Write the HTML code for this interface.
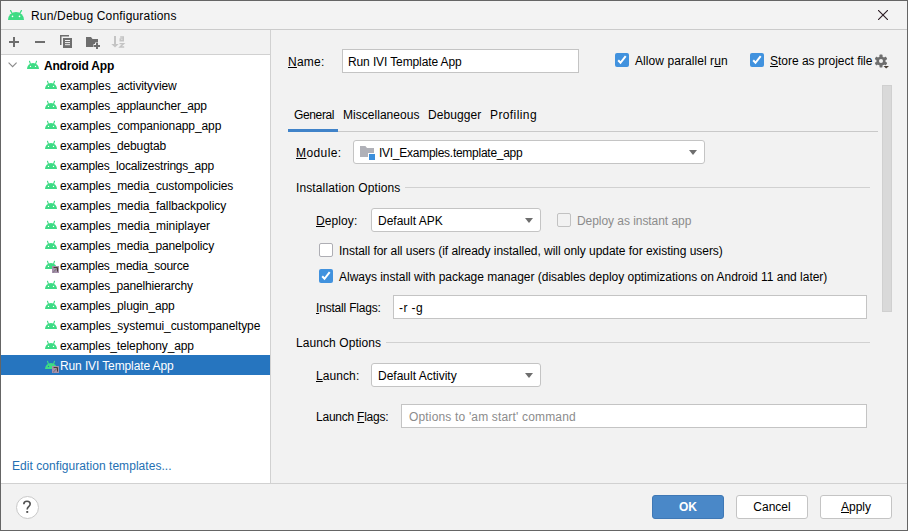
<!DOCTYPE html>
<html><head><meta charset="utf-8">
<style>
*{margin:0;padding:0;box-sizing:border-box}
html,body{width:908px;height:531px;overflow:hidden;background:#f2f2f2}
body{position:relative;font-family:"Liberation Sans",sans-serif;font-size:12px;color:#000}
.a{position:absolute}
.t{position:absolute;white-space:pre;font-size:12px;line-height:16px}
.u{text-decoration:underline;text-underline-offset:1px;text-decoration-thickness:1px}
.box{position:absolute;background:#fff;border:1px solid #c4c4c4}
.combo{position:absolute;background:#fff;border:1px solid #c4c4c4;border-radius:3px}
.arrow{position:absolute;width:0;height:0;border-left:4.5px solid transparent;border-right:4.5px solid transparent;border-top:5px solid #6e6e6e}
.cb{position:absolute;width:14px;height:14px;border-radius:2px}
.cbon{background:#4192de}
.cboff{background:#fff;border:1px solid #aeaeb4}
.hl{position:absolute;height:1px;background:#d1d1d1}
.btn{position:absolute;height:24px;width:72px;border-radius:3px;border:1px solid #c4c4c4;background:#fff;text-align:center;line-height:23px;font-size:12px;white-space:pre}
</style></head><body>
<div class="a" style="left:0;top:0;width:908px;height:531px;border:1px solid #656565;z-index:50"></div>
<div class="a" style="left:1px;top:1px;width:906px;height:28px;background:#f3f3f3"></div>
<div class="hl" style="left:1px;top:29px;width:906px;background:#cbcbcb"></div>
<svg class="a" style="left:8px;top:10px" width="16" height="10" viewBox="0 0 16 10">
<path d="M0 10 A8 8 0 0 1 16 10 Z" fill="#3ddc84"/>
<path d="M2.6 0.6 L3.9 3 M13.4 0.6 L12.1 3" stroke="#3ddc84" stroke-width="1.3" stroke-linecap="round"/>
<circle cx="4.5" cy="6.4" r="0.8" fill="#fff"/><circle cx="11.5" cy="6.4" r="0.8" fill="#fff"/>
</svg>
<div class="t" style="left:31px;top:8px;letter-spacing:0.174px;">Run/Debug Configurations</div>
<svg class="a" style="left:878px;top:10px" width="10" height="10" viewBox="0 0 10 10"><path d="M0 0L10 10M10 0L0 10" stroke="#2a1a22" stroke-width="1.1"/></svg>
<div class="a" style="left:270px;top:30px;width:1px;height:453px;background:#d1d1d1"></div>
<div class="hl" style="left:1px;top:54px;width:269px"></div>
<div class="a" style="left:1px;top:55px;width:269px;height:428px;background:#fff"></div>
<svg class="a" style="left:0;top:30px" width="130" height="24" viewBox="0 30 130 24">
<path d="M9 42H19M14 37V47" stroke="#6e6e6e" stroke-width="2"/>
<path d="M35 42H45" stroke="#6e6e6e" stroke-width="2"/>
<path d="M60.75 45V35.75H69" stroke="#6e6e6e" stroke-width="1.5" fill="none"/>
<rect x="63" y="38" width="9" height="10" fill="#6e6e6e"/>
<path d="M65 40.5H70M65 42.6H70M65 44.7H70" stroke="#f2f2f2" stroke-width="1"/>
<path d="M86 37H91L92.5 39H98V47H86Z" fill="#6e6e6e"/>
<path d="M97 42.5V49.5M93.5 46H100.5" stroke="#f2f2f2" stroke-width="4"/>
<path d="M97 43V49M94 46H100" stroke="#6e6e6e" stroke-width="2"/>
<path d="M115 36V45" stroke="#c4c4c4" stroke-width="2"/>
<path d="M111.3 44H118.7L115 47.6Z" fill="#c4c4c4"/>
<path d="M120.2 37H123.3V40.8H120.2V38.9H123" stroke="#c4c4c4" stroke-width="1.4" fill="none"/>
<path d="M119.5 43.6H123.6L120 47H124.2" stroke="#c4c4c4" stroke-width="1.4" fill="none"/>
</svg>
<svg class="a" style="left:8px;top:62px" width="10" height="6" viewBox="0 0 10 6"><path d="M0.6 0.6L4.6 4.6L8.6 0.6" stroke="#8a8a8a" stroke-width="1.1" fill="none"/></svg>
<svg class="a" style="left:27px;top:61px;overflow:visible" width="12" height="9" viewBox="0 0 12 9">
<path d="M0 8 A6 6 0 0 1 12 8 Z" fill="#3ddc84"/>
<path d="M2.5 0.3 L3.4 2.9 M9.5 0.3 L8.6 2.9" stroke="#3ddc84" stroke-width="1.1" stroke-linecap="round"/>
<circle cx="3.5" cy="5.4" r="0.65" fill="#fff"/><circle cx="8.5" cy="5.4" r="0.65" fill="#fff"/>
</svg><div class="t" style="left:44px;top:58px;letter-spacing:-0.2px;font-weight:bold;">Android App</div>
<svg class="a" style="left:45px;top:81px;overflow:visible" width="12" height="9" viewBox="0 0 12 9">
<path d="M0 8 A6 6 0 0 1 12 8 Z" fill="#3ddc84"/>
<path d="M2.5 0.3 L3.4 2.9 M9.5 0.3 L8.6 2.9" stroke="#3ddc84" stroke-width="1.1" stroke-linecap="round"/>
<circle cx="3.5" cy="5.4" r="0.65" fill="#fff"/><circle cx="8.5" cy="5.4" r="0.65" fill="#fff"/>
</svg><div class="t" style="left:60px;top:78px;letter-spacing:-0.1px;">examples_activityview</div>
<svg class="a" style="left:45px;top:101px;overflow:visible" width="12" height="9" viewBox="0 0 12 9">
<path d="M0 8 A6 6 0 0 1 12 8 Z" fill="#3ddc84"/>
<path d="M2.5 0.3 L3.4 2.9 M9.5 0.3 L8.6 2.9" stroke="#3ddc84" stroke-width="1.1" stroke-linecap="round"/>
<circle cx="3.5" cy="5.4" r="0.65" fill="#fff"/><circle cx="8.5" cy="5.4" r="0.65" fill="#fff"/>
</svg><div class="t" style="left:60px;top:98px;letter-spacing:-0.165px;">examples_applauncher_app</div>
<svg class="a" style="left:45px;top:121px;overflow:visible" width="12" height="9" viewBox="0 0 12 9">
<path d="M0 8 A6 6 0 0 1 12 8 Z" fill="#3ddc84"/>
<path d="M2.5 0.3 L3.4 2.9 M9.5 0.3 L8.6 2.9" stroke="#3ddc84" stroke-width="1.1" stroke-linecap="round"/>
<circle cx="3.5" cy="5.4" r="0.65" fill="#fff"/><circle cx="8.5" cy="5.4" r="0.65" fill="#fff"/>
</svg><div class="t" style="left:60px;top:118px;letter-spacing:-0.088px;">examples_companionapp_app</div>
<svg class="a" style="left:45px;top:141px;overflow:visible" width="12" height="9" viewBox="0 0 12 9">
<path d="M0 8 A6 6 0 0 1 12 8 Z" fill="#3ddc84"/>
<path d="M2.5 0.3 L3.4 2.9 M9.5 0.3 L8.6 2.9" stroke="#3ddc84" stroke-width="1.1" stroke-linecap="round"/>
<circle cx="3.5" cy="5.4" r="0.65" fill="#fff"/><circle cx="8.5" cy="5.4" r="0.65" fill="#fff"/>
</svg><div class="t" style="left:60px;top:138px;letter-spacing:-0.119px;">examples_debugtab</div>
<svg class="a" style="left:45px;top:161px;overflow:visible" width="12" height="9" viewBox="0 0 12 9">
<path d="M0 8 A6 6 0 0 1 12 8 Z" fill="#3ddc84"/>
<path d="M2.5 0.3 L3.4 2.9 M9.5 0.3 L8.6 2.9" stroke="#3ddc84" stroke-width="1.1" stroke-linecap="round"/>
<circle cx="3.5" cy="5.4" r="0.65" fill="#fff"/><circle cx="8.5" cy="5.4" r="0.65" fill="#fff"/>
</svg><div class="t" style="left:60px;top:158px;letter-spacing:-0.222px;">examples_localizestrings_app</div>
<svg class="a" style="left:45px;top:181px;overflow:visible" width="12" height="9" viewBox="0 0 12 9">
<path d="M0 8 A6 6 0 0 1 12 8 Z" fill="#3ddc84"/>
<path d="M2.5 0.3 L3.4 2.9 M9.5 0.3 L8.6 2.9" stroke="#3ddc84" stroke-width="1.1" stroke-linecap="round"/>
<circle cx="3.5" cy="5.4" r="0.65" fill="#fff"/><circle cx="8.5" cy="5.4" r="0.65" fill="#fff"/>
</svg><div class="t" style="left:60px;top:178px;letter-spacing:-0.1px;">examples_media_custompolicies</div>
<svg class="a" style="left:45px;top:201px;overflow:visible" width="12" height="9" viewBox="0 0 12 9">
<path d="M0 8 A6 6 0 0 1 12 8 Z" fill="#3ddc84"/>
<path d="M2.5 0.3 L3.4 2.9 M9.5 0.3 L8.6 2.9" stroke="#3ddc84" stroke-width="1.1" stroke-linecap="round"/>
<circle cx="3.5" cy="5.4" r="0.65" fill="#fff"/><circle cx="8.5" cy="5.4" r="0.65" fill="#fff"/>
</svg><div class="t" style="left:60px;top:198px;letter-spacing:-0.093px;">examples_media_fallbackpolicy</div>
<svg class="a" style="left:45px;top:221px;overflow:visible" width="12" height="9" viewBox="0 0 12 9">
<path d="M0 8 A6 6 0 0 1 12 8 Z" fill="#3ddc84"/>
<path d="M2.5 0.3 L3.4 2.9 M9.5 0.3 L8.6 2.9" stroke="#3ddc84" stroke-width="1.1" stroke-linecap="round"/>
<circle cx="3.5" cy="5.4" r="0.65" fill="#fff"/><circle cx="8.5" cy="5.4" r="0.65" fill="#fff"/>
</svg><div class="t" style="left:60px;top:218px;letter-spacing:-0.088px;">examples_media_miniplayer</div>
<svg class="a" style="left:45px;top:241px;overflow:visible" width="12" height="9" viewBox="0 0 12 9">
<path d="M0 8 A6 6 0 0 1 12 8 Z" fill="#3ddc84"/>
<path d="M2.5 0.3 L3.4 2.9 M9.5 0.3 L8.6 2.9" stroke="#3ddc84" stroke-width="1.1" stroke-linecap="round"/>
<circle cx="3.5" cy="5.4" r="0.65" fill="#fff"/><circle cx="8.5" cy="5.4" r="0.65" fill="#fff"/>
</svg><div class="t" style="left:60px;top:238px;letter-spacing:-0.132px;">examples_media_panelpolicy</div>
<svg class="a" style="left:45px;top:261px;overflow:visible" width="12" height="9" viewBox="0 0 12 9">
<path d="M0 8 A6 6 0 0 1 12 8 Z" fill="#3ddc84"/>
<path d="M2.5 0.3 L3.4 2.9 M9.5 0.3 L8.6 2.9" stroke="#3ddc84" stroke-width="1.1" stroke-linecap="round"/>
<circle cx="3.5" cy="5.4" r="0.65" fill="#fff"/><rect x="7" y="5" width="7" height="7" fill="#a590ab"/><path d="M8.6 6.5H12.5V10.6" stroke="#4a3c33" stroke-width="1" fill="none"/><path d="M8.2 11.2L12 7.4" stroke="#707070" stroke-width="1"/>
</svg><div class="t" style="left:60px;top:258px;letter-spacing:-0.215px;">examples_media_source</div>
<svg class="a" style="left:45px;top:281px;overflow:visible" width="12" height="9" viewBox="0 0 12 9">
<path d="M0 8 A6 6 0 0 1 12 8 Z" fill="#3ddc84"/>
<path d="M2.5 0.3 L3.4 2.9 M9.5 0.3 L8.6 2.9" stroke="#3ddc84" stroke-width="1.1" stroke-linecap="round"/>
<circle cx="3.5" cy="5.4" r="0.65" fill="#fff"/><circle cx="8.5" cy="5.4" r="0.65" fill="#fff"/>
</svg><div class="t" style="left:60px;top:278px;letter-spacing:-0.173px;">examples_panelhierarchy</div>
<svg class="a" style="left:45px;top:301px;overflow:visible" width="12" height="9" viewBox="0 0 12 9">
<path d="M0 8 A6 6 0 0 1 12 8 Z" fill="#3ddc84"/>
<path d="M2.5 0.3 L3.4 2.9 M9.5 0.3 L8.6 2.9" stroke="#3ddc84" stroke-width="1.1" stroke-linecap="round"/>
<circle cx="3.5" cy="5.4" r="0.65" fill="#fff"/><circle cx="8.5" cy="5.4" r="0.65" fill="#fff"/>
</svg><div class="t" style="left:60px;top:298px;letter-spacing:-0.111px;">examples_plugin_app</div>
<svg class="a" style="left:45px;top:321px;overflow:visible" width="12" height="9" viewBox="0 0 12 9">
<path d="M0 8 A6 6 0 0 1 12 8 Z" fill="#3ddc84"/>
<path d="M2.5 0.3 L3.4 2.9 M9.5 0.3 L8.6 2.9" stroke="#3ddc84" stroke-width="1.1" stroke-linecap="round"/>
<circle cx="3.5" cy="5.4" r="0.65" fill="#fff"/><circle cx="8.5" cy="5.4" r="0.65" fill="#fff"/>
</svg><div class="t" style="left:60px;top:318px;letter-spacing:-0.075px;">examples_systemui_custompaneltype</div>
<svg class="a" style="left:45px;top:341px;overflow:visible" width="12" height="9" viewBox="0 0 12 9">
<path d="M0 8 A6 6 0 0 1 12 8 Z" fill="#3ddc84"/>
<path d="M2.5 0.3 L3.4 2.9 M9.5 0.3 L8.6 2.9" stroke="#3ddc84" stroke-width="1.1" stroke-linecap="round"/>
<circle cx="3.5" cy="5.4" r="0.65" fill="#fff"/><circle cx="8.5" cy="5.4" r="0.65" fill="#fff"/>
</svg><div class="t" style="left:60px;top:338px;letter-spacing:-0.133px;">examples_telephony_app</div>
<div class="a" style="left:1px;top:355px;width:269px;height:20px;background:#2675bf"></div>
<svg class="a" style="left:45px;top:361px;overflow:visible" width="12" height="9" viewBox="0 0 12 9">
<path d="M0 8 A6 6 0 0 1 12 8 Z" fill="#3ddc84"/>
<path d="M2.5 0.3 L3.4 2.9 M9.5 0.3 L8.6 2.9" stroke="#3ddc84" stroke-width="1.1" stroke-linecap="round"/>
<circle cx="3.5" cy="5.4" r="0.65" fill="#2675bf"/><rect x="7" y="5" width="7" height="7" fill="#a590ab"/><path d="M8.6 6.5H12.5V10.6" stroke="#4a3c33" stroke-width="1" fill="none"/><path d="M8.2 11.2L12 7.4" stroke="#707070" stroke-width="1"/>
</svg><div class="t" style="left:60px;top:358px;letter-spacing:-0.116px;color:#fff;">Run IVI Template App</div>
<div class="t" style="left:12px;top:458px;letter-spacing:0.05px;color:#2470b3">Edit configuration templates...</div>
<div class="hl" style="left:1px;top:483px;width:906px"></div>
<div class="a" style="left:16px;top:496px;width:23px;height:23px;border-radius:50%;background:#fff;border:1px solid #c9c9c9"></div>
<svg class="a" style="left:16px;top:496px" width="23" height="23" viewBox="16 496 23 23"><path d="M23.8 504.2C23.8 502.4 25.2 501.3 27 501.3C28.8 501.3 30.2 502.4 30.2 504C30.2 505.4 29.3 506 28.4 506.8C27.6 507.5 27.2 508 27.2 509.4" stroke="#505050" stroke-width="1.6" fill="none"/><rect x="26.3" y="511" width="1.9" height="1.9" fill="#505050"/></svg>
<div class="btn" style="left:652px;top:495px;background:#4a88c8;border-color:#3f78b5;color:#fff;font-weight:bold">OK</div>
<div class="btn" style="left:736px;top:495px">Cancel</div>
<div class="btn" style="left:820px;top:495px"><span class="u">A</span>pply</div>
<div class="t" style="left:288px;top:54px;letter-spacing:0.25px;"><span class="u">N</span>ame:</div>
<div class="box" style="left:342px;top:49px;width:237px;height:24px"></div>
<div class="t" style="left:348px;top:54px;letter-spacing:-0.116px;">Run IVI Template App</div>
<div class="cb cbon" style="left:615px;top:53px"></div><svg class="a" style="left:615px;top:53px" width="14" height="14" viewBox="0 0 14 14"><path d="M3.2 7.3L5.5 9.8L10.7 3.2" stroke="#fff" stroke-width="2" fill="none"/></svg>
<div class="t" style="left:635px;top:53px;letter-spacing:0.071px;">Allow parallel r<span class="u">u</span>n</div>
<div class="cb cbon" style="left:750px;top:53px"></div><svg class="a" style="left:750px;top:53px" width="14" height="14" viewBox="0 0 14 14"><path d="M3.2 7.3L5.5 9.8L10.7 3.2" stroke="#fff" stroke-width="2" fill="none"/></svg>
<div class="t" style="left:770px;top:53px;letter-spacing:-0.015px;"><span class="u">S</span>tore as project file</div>
<svg class="a" style="left:874px;top:54px" width="16" height="16" viewBox="874 54 16 16"><g transform="translate(881,61)" fill="#6e6e6e"><circle r="4.6"/><rect x="-1.5" y="-6.4" width="3" height="3" rx="0.6" transform="rotate(0)"/><rect x="-1.5" y="-6.4" width="3" height="3" rx="0.6" transform="rotate(60)"/><rect x="-1.5" y="-6.4" width="3" height="3" rx="0.6" transform="rotate(120)"/><rect x="-1.5" y="-6.4" width="3" height="3" rx="0.6" transform="rotate(180)"/><rect x="-1.5" y="-6.4" width="3" height="3" rx="0.6" transform="rotate(240)"/><rect x="-1.5" y="-6.4" width="3" height="3" rx="0.6" transform="rotate(300)"/><circle r="2" fill="#f2f2f2"/></g><path d="M883.5 66H889L886.2 68.6Z" fill="#4a4038"/></svg><div class="a" style="left:882px;top:85px;width:10px;height:227px;background:#d9d9d9;border:1px solid #d0d0d0"></div>
<div class="t" style="left:294px;top:107px;letter-spacing:-0.367px;">General</div>
<div class="t" style="left:343px;top:107px;letter-spacing:0.033px;">Miscellaneous</div>
<div class="t" style="left:428px;top:107px;letter-spacing:0.071px;">Debugger</div>
<div class="t" style="left:490px;top:107px;letter-spacing:0.4px;">Profiling</div>
<div class="hl" style="left:288px;top:131px;width:590px;background:#c9c9c9"></div>
<div class="a" style="left:288px;top:129px;width:50px;height:3px;background:#4083c9"></div>
<div class="t" style="left:296px;top:145px;letter-spacing:0.417px;"><span class="u">M</span>odule:</div>
<div class="combo" style="left:353px;top:140px;width:352px;height:24px"></div>
<svg class="a" style="left:360px;top:146px" width="16" height="14" viewBox="0 0 16 14">
<path d="M0 0H5.4L7 2H14V11H0Z" fill="#b0b1b8"/>
<rect x="8" y="7" width="8" height="8" fill="#fff"/>
<rect x="9" y="8" width="6" height="6" fill="#3c8fdc"/>
</svg>
<div class="t" style="left:379px;top:145px;letter-spacing:-0.267px;">IVI_Examples.template_app</div>
<div class="arrow" style="left:689px;top:150px;border-left-width:4.8px;border-right-width:4.8px"></div>
<div class="t" style="left:296px;top:180px;letter-spacing:0.116px;">Installation Options</div>
<div class="hl" style="left:405px;top:187px;width:465px"></div>
<div class="t" style="left:316px;top:213px;letter-spacing:0.1px;"><span class="u">D</span>eploy:</div>
<div class="combo" style="left:371px;top:208px;width:170px;height:24px"></div>
<div class="t" style="left:378px;top:213px;">Default APK</div>
<div class="arrow" style="left:525px;top:218px"></div>
<div class="cb" style="left:557px;top:213px;border:1px solid #c2c2c2"></div>
<div class="t" style="left:577px;top:213px;letter-spacing:-0.055px;color:#8c8c8c;">Deploy as instant app</div>
<div class="cb cboff" style="left:319px;top:243px"></div>
<div class="t" style="left:339px;top:243px;letter-spacing:-0.038px;">Install for all users (if already installed, will only update for existing users)</div>
<div class="cb cbon" style="left:319px;top:269px"></div><svg class="a" style="left:319px;top:269px" width="14" height="14" viewBox="0 0 14 14"><path d="M3.2 7.3L5.5 9.8L10.7 3.2" stroke="#fff" stroke-width="2" fill="none"/></svg>
<div class="t" style="left:339px;top:269px;letter-spacing:-0.019px;">Always install with package manager (disables deploy optimizations on Android 11 and later)</div>
<div class="t" style="left:316px;top:300px;letter-spacing:-0.192px;"><span class="u">I</span>nstall Flags:</div>
<div class="box" style="left:393px;top:295px;width:474px;height:24px"></div>
<div class="t" style="left:399px;top:300px;letter-spacing:0.4px">-r -g</div>
<div class="t" style="left:296px;top:335px;letter-spacing:0.077px;">Launch Options</div>
<div class="hl" style="left:386px;top:342px;width:484px"></div>
<div class="t" style="left:316px;top:368px;letter-spacing:0.083px;"><span class="u">L</span>aunch:</div>
<div class="combo" style="left:371px;top:363px;width:170px;height:24px"></div>
<div class="t" style="left:378px;top:368px;">Default Activity</div>
<div class="arrow" style="left:525px;top:373px"></div>
<div class="t" style="left:316px;top:409px;letter-spacing:-0.233px;">Launch <span class="u">F</span>lags:</div>
<div class="box" style="left:401px;top:404px;width:466px;height:24px"></div>
<div class="t" style="left:409px;top:409px;letter-spacing:0.168px;color:#8c8c8c;">Options to 'am start' command</div>
</body></html>
